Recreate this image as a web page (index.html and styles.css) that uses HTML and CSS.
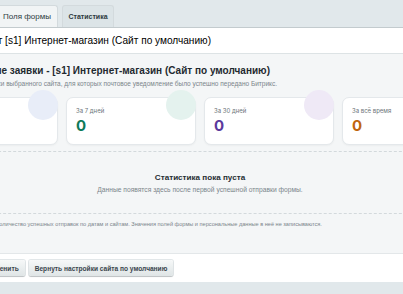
FILE: index.html
```html
<!DOCTYPE html>
<html lang="ru">
<head>
  <meta charset="UTF-8">
  <title>Статистика</title>
  <link rel="stylesheet" href="styles.css">
</head>
<body>
<div class="tabs">
  <div class="tab">Поля формы</div>
  <div class="tab active">Статистика</div>
</div>
<div class="titlebar">
  <span class="title">Сайт [s1] Интернет-магазин (Сайт по умолчанию)</span>
</div>

<div class="content">
  <div class="stats">
    <h2>Успешные заявки - [s1] Интернет-магазин (Сайт по умолчанию)</h2>
    <p class="sub">Учитываются заявки выбранного сайта, для которых почтовое уведомление было успешно передано Битрикс.</p>

    <div class="cards">
      <div class="card blue">
        <div class="label">Сегодня</div>
        <div class="num">0</div>
      </div>
      <div class="card green">
        <div class="label">За 7 дней</div>
        <div class="num">0</div>
      </div>
      <div class="card purple">
        <div class="label">За 30 дней</div>
        <div class="num">0</div>
      </div>
      <div class="card orange">
        <div class="label">За всё время</div>
        <div class="num">0</div>
      </div>
    </div>

    <div class="empty">
      <div class="empty-title">Статистика пока пуста</div>
      <div class="empty-sub">Данные появятся здесь после первой успешной отправки формы.</div>
    </div>
  </div>
  <p class="note">Количество успешных отправок по датам и сайтам. Значения полей формы и персональные данные в неё не записываются.</p>
</div>

<div class="buttons">
  <button class="btn">Применить</button>
  <button class="btn">Вернуть настройки сайта по умолчанию</button>
</div>
<div class="footer"></div>
</body>
</html>
```

FILE: styles.css
```css
body {
  margin: 0;
  font-family: "Liberation Sans", Arial, sans-serif;
  background: #f4f6f7;
  color: #000;
  overflow: hidden;
  height: 294px;
}
.tabs {
  height: 27px;
  background: #e1e8eb;
  display: flex;
  align-items: flex-end;
  gap: 4px;
  margin-left: -4px;
}
.tab {
  box-sizing: border-box;
  width: 62px;
  height: 22px;
  line-height: 22px;
  font-size: 8px;
  white-space: nowrap;
  color: #2c3a40;
  background: #f1f4f5;
  border: 1px solid #d3dadd;
  border-bottom: none;
  border-radius: 3px 3px 0 0;
  text-align: center;
}
.tab.active {
  width: 52px;
  font-size: 7px;
  background: #dce4e7;
  font-weight: bold;
}
.titlebar {
  height: 25px;
  background: #fff;
  border-top: 1px solid #c3cbce;
  border-bottom: 1px solid #dde3e5;
  display: flex;
  align-items: center;
  overflow: hidden;
  white-space: nowrap;
}
.title {
  font-size: 10.1px;
  margin-left: -21px;
}
.content {
  margin-left: -72px;
  width: 544px;
}
/* heading and subtitle end where they end in the wide page */
.stats h2 {
  width: 342px;
  margin: 11px 0 0;
  font-size: 10px;
  color: #1f2a30;
  white-space: nowrap;
  text-align: right;
}
.sub {
  width: 349px;
  margin: 4px 0 0;
  font-size: 6.5px;
  color: #7b858b;
  white-space: nowrap;
  text-align: right;
}
.cards {
  display: grid;
  grid-template-columns: repeat(4, 1fr);
  gap: 8px;
  margin-top: 10px;
}
.card {
  position: relative;
  height: 48px;
  box-sizing: border-box;
  background: #fff;
  border: 1px solid #e4e8eb;
  border-radius: 7px;
  padding: 9px 9px 0;
  font-family: Inter, "Liberation Sans", sans-serif;
  box-shadow: 0 1px 2px #0000000a;
}
.card::after {
  content: "";
  position: absolute;
  width: 30px;
  height: 30px;
  border-radius: 50%;
  top: -8px;
  right: -1px;
}
.card.blue::after { background: #e8edf8; }
.card.green::after { background: #e4f2ee; }
.card.purple::after { background: #efe9f6; }
.card.orange::after { background: #f7eee4; }
.label {
  position: relative;
  z-index: 1;
  font-size: 6px;
  color: #6b7479;
}
.num {
  position: relative;
  z-index: 1;
  font-size: 15px;
  font-weight: 700;
  margin-top: 2px;
}
.green .num { color: #0f7a5a; }
.purple .num { color: #5b3a9c; }
.orange .num { color: #c0650f; }
.blue .num { color: #2b5bb0; }
.empty {
  margin-top: 6px;
  border-top: 1px dashed #d3d9dc;
  border-bottom: 1px dashed #d3d9dc;
  height: 63px;
  text-align: center;
  padding-top: 21px;
  box-sizing: border-box;
}
.empty-title {
  font-size: 8.1px;
  font-weight: bold;
  color: #262e33;
}
.empty-sub {
  margin-top: 4px;
  font-size: 6.7px;
  color: #7b858b;
}
.note {
  margin: 7px 0 0 68px;
  font-size: 5.6px;
  color: #7b858b;
  white-space: nowrap;
}
.buttons {
  margin-top: 26px;
  height: 29px;
  background: #fff;
  border-top: 1px solid #e3e7e9;
  display: flex;
  align-items: center;
  gap: 4px;
  margin-left: -24px;
  box-sizing: border-box;
}
.btn {
  height: 16px;
  padding: 0 6px;
  font-family: "Liberation Sans", Arial, sans-serif;
  font-size: 6.6px;
  font-weight: bold;
  color: #3b464d;
  border: none;
  border-radius: 2px;
  background: linear-gradient(#f6f8f8, #dfe5e6);
  box-shadow: 0 1px 1px #0000002a, 0 0 0 1px #e2e7e9;
}
.footer {
  height: 12px;
  background: #e1e8eb;
}
```
